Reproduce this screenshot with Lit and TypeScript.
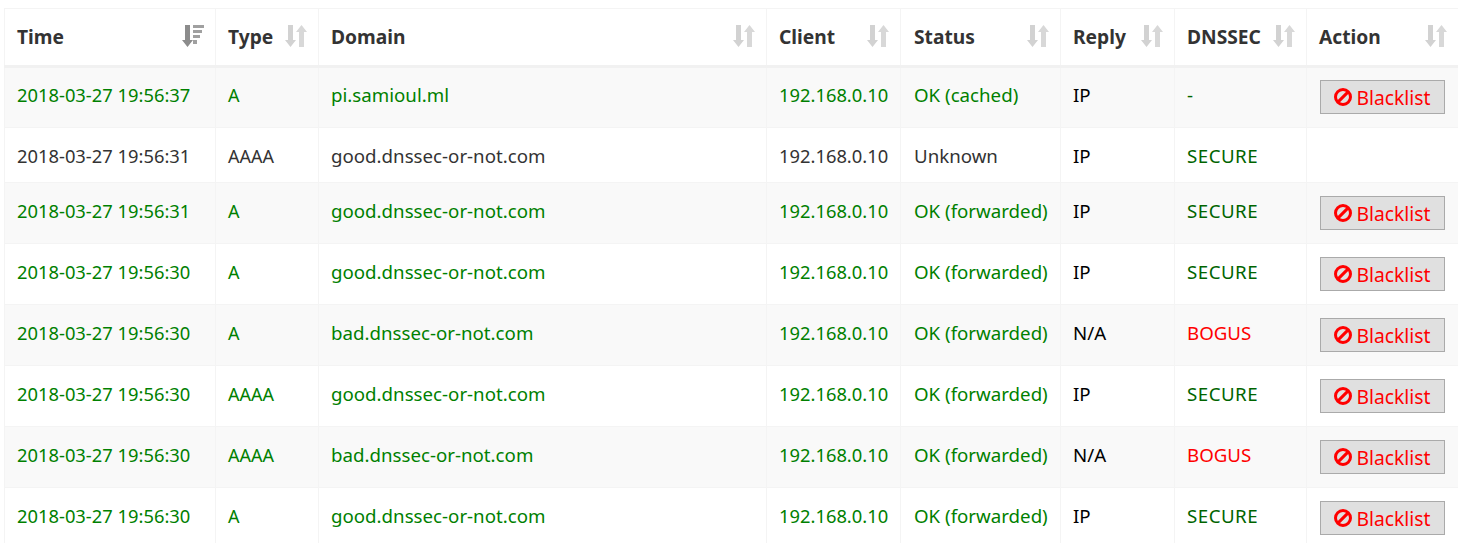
import { LitElement, html, css, svg } from "lit";
import { customElement } from "lit/decorators.js";

const rows: { t: string; ty: string; d: string; s: string; r: string; sec: string; secC: string; c: string; btn: boolean; h: number }[] = [
  { t: "2018-03-27 19:56:37", ty: "A", d: "pi.samioul.ml", s: "OK (cached)", r: "IP", sec: "-", secC: "sg", c: "g", btn: true, h: 61 },
  { t: "2018-03-27 19:56:31", ty: "AAAA", d: "good.dnssec-or-not.com", s: "Unknown", r: "IP", sec: "SECURE", secC: "sg", c: "k", btn: false, h: 55 },
  { t: "2018-03-27 19:56:31", ty: "A", d: "good.dnssec-or-not.com", s: "OK (forwarded)", r: "IP", sec: "SECURE", secC: "sg", c: "g", btn: true, h: 61 },
  { t: "2018-03-27 19:56:30", ty: "A", d: "good.dnssec-or-not.com", s: "OK (forwarded)", r: "IP", sec: "SECURE", secC: "sg", c: "g", btn: true, h: 61 },
  { t: "2018-03-27 19:56:30", ty: "A", d: "bad.dnssec-or-not.com", s: "OK (forwarded)", r: "N/A", sec: "BOGUS", secC: "sr", c: "g", btn: true, h: 61 },
  { t: "2018-03-27 19:56:30", ty: "AAAA", d: "good.dnssec-or-not.com", s: "OK (forwarded)", r: "IP", sec: "SECURE", secC: "sg", c: "g", btn: true, h: 61 },
  { t: "2018-03-27 19:56:30", ty: "AAAA", d: "bad.dnssec-or-not.com", s: "OK (forwarded)", r: "N/A", sec: "BOGUS", secC: "sr", c: "g", btn: true, h: 61 },
  { t: "2018-03-27 19:56:30", ty: "A", d: "good.dnssec-or-not.com", s: "OK (forwarded)", r: "IP", sec: "SECURE", secC: "sg", c: "g", btn: true, h: 61 },
];
const heads: [string, boolean][] = [["Time", true], ["Type", false], ["Domain", false], ["Client", false], ["Status", false], ["Reply", false], ["DNSSEC", false], ["Action", false]];

const sortIcon = (active: boolean) => html`<svg class="sort" width="22" height="22" viewBox="0 0 22 22">
  ${active
    ? svg`<path fill="#8c8c8c" d="M3 0h5v15h3L5.5 22 0 15h3z"/><path fill="#a0a0a0" d="M11 0h11v3H11zM11 5h9v3h-9zM11 10h7v3h-7zM11 15h4v4h-4z"/>`
    : svg`<path fill="#d2d2d2" d="M3 0h5v15h3L5.5 22 0 15h3z"/><path fill="#d8d8d8" d="M14 7h-3l5.5-7L22 7h-3v15h-5z"/>`}
</svg>`;

@customElement("app-root")
export class AppRoot extends LitElement {
  static styles = css`
    :host { display: block; background: #fff; height: 543px; overflow: hidden; font-family: "Noto Sans", sans-serif; font-size: 18.7px; color: #333; padding: 8px 0 0 4px; box-sizing: border-box; }
    table { border-collapse: collapse; table-layout: fixed; width: 1454px; }
    th { height: 58px; box-sizing: border-box; text-align: left; padding: 0 12px 1px; font-weight: 700; color: #333; border: 1px solid #f4f4f4; border-bottom: 3px solid #f1f1f1; position: relative; font-size: 19.2px; }
    td { padding: 16px 12px 0; line-height: 24px; vertical-align: top; border: 1px solid #f4f4f4; white-space: nowrap; box-sizing: border-box; }
    tr.odd td { background: #f9f9f9; }
    tbody tr:first-child td { padding-top: 15px; }
    tbody tr:first-child td.act { padding-top: 12px; }
    td.num { font-size: 18.35px; }
    td.type { font-size: 18px; }
    td.status, th.status { padding-left: 13px; }
    td.act { padding-top: 13px; padding-left: 13px; }
    .g { color: #008000; }
    .k { color: #333; }
    .b { color: #000; }
    .sg { color: #006400; letter-spacing: 0.5px; }
    .sr { color: #f00; }
    .sort { position: absolute; right: 11px; top: 16px; }
    .btn { display: flex; align-items: center; justify-content: center; gap: 4px; width: 125px; height: 34px; box-sizing: border-box; background: #e0e0e0; border: 1px solid #aaa; color: #f00; font-size: 19.3px; font-family: inherit; padding: 0; }
  `;
  render() {
    const widths = [211, 103, 448, 134, 160, 114, 132, 152];
    return html`<table>
      <colgroup>${widths.map((w) => html`<col style="width:${w}px" />`)}</colgroup>
      <thead><tr>${heads.map(([h, a]) => html`<th class=${h === "Status" ? "status" : ""}>${h}${sortIcon(a)}</th>`)}</tr></thead>
      <tbody>${rows.map((r, i) => html`<tr class=${i % 2 === 0 ? "odd" : ""} style="height:${r.h}px">
        <td class="num ${r.c}">${r.t}</td><td class="type ${r.c}">${r.ty}</td><td class=${r.c}>${r.d}</td><td class="num ${r.c}">192.168.0.10</td><td class="status ${r.c}">${r.s}</td>
        <td class="b">${r.r}</td><td class=${r.secC}>${r.sec}</td>
        <td class="act">${r.btn ? html`<button class="btn"><svg width="18" height="18" viewBox="0 0 18 18"><circle cx="9" cy="9" r="7.5" fill="none" stroke="#f00" stroke-width="3"/><path d="M3.6 14.4 14.4 3.6" stroke="#f00" stroke-width="3"/></svg>Blacklist</button>` : ""}</td>
      </tr>`)}</tbody>
    </table>`;
  }
}
